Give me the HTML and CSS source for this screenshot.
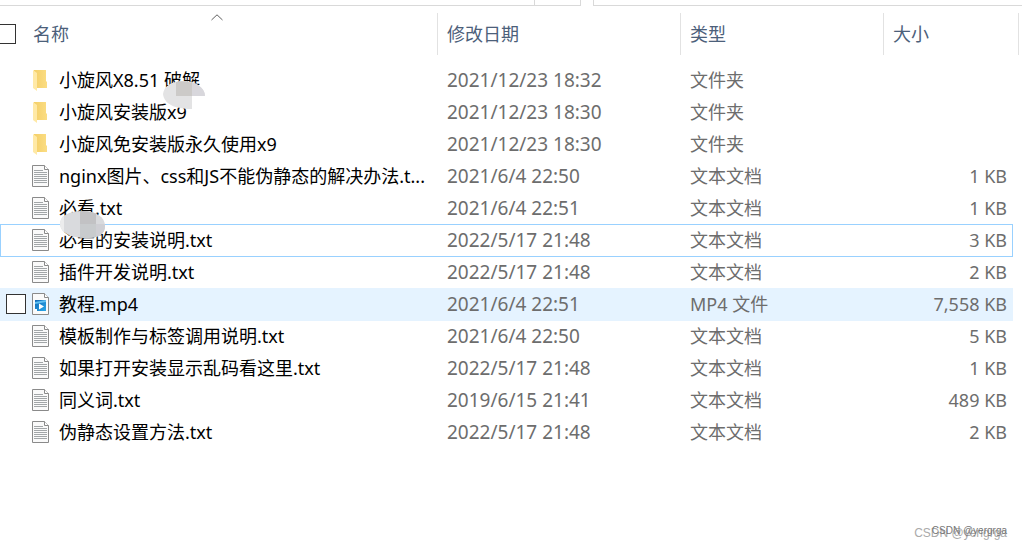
FILE: index.html
```html
<!DOCTYPE html>
<html lang="zh-CN">
<head>
<meta charset="utf-8">
<title>文件列表</title>
<link rel="stylesheet" href="styles.css">
</head>
<body>
<svg class="defs" aria-hidden="true">
  <defs>
    <linearGradient id="gold"><stop offset="0" stop-color="#f4cf68"/><stop offset="1" stop-color="#fbdd83"/></linearGradient>
    <linearGradient id="blue" x2="1" y2="1"><stop offset="0" stop-color="#1268b4"/><stop offset="1" stop-color="#29a8ea"/></linearGradient>
    <symbol id="folder" viewBox="0 0 18 24">
      <path d="M2 2H14V13L15 14V20H2Z" fill="url(#gold)"/>
      <path d="M1 2L5 5V23L1 20Z" fill="#ffe9a6"/>
    </symbol>
    <symbol id="page" viewBox="0 0 18 24">
      <path d="M.5 1.5H12.5L16.5 5.5V22.5H.5Z" fill="#fafafa" stroke="#8a8a8a"/>
      <path d="M12.5 1.5V5.5H16.5" fill="#fff" stroke="#8a8a8a"/>
    </symbol>
    <symbol id="text" viewBox="0 0 18 24">
      <use href="#page"/>
      <path d="M2 6.5H11M2 8.5H15M2 10.5H15M2 12.5H15M2 14.5H15M2 16.5H15M2 18.5H15" stroke="#a2a6a8"/>
    </symbol>
    <symbol id="video" viewBox="0 0 18 24">
      <use href="#page"/>
      <path d="M3 8H14V19H3Z" fill="url(#blue)"/>
      <path d="M3 10L14 8V10L3 12Z" fill="#62c1f2"/>
      <path d="M3 17H5V19H3ZM7 11.5L12 14.5L7 17.5Z" fill="#fff"/>
    </symbol>
  </defs>
</svg>
<div class="toolbar"><div class="address"></div><div class="search"></div></div>
<main class="files">
  <table class="list">
    <colgroup><col class="c-name"><col class="c-date"><col class="c-type"><col></colgroup>
    <thead>
      <tr>
        <th><div class="head-name"><input type="checkbox" class="check" aria-label="全选"><span>名称</span></div>
          <svg class="sort" width="12" height="7" viewBox="0 0 12 7"><path d="M.5 6L6 .8L11.5 6" fill="none" stroke="#606060"/></svg></th>
        <th>修改日期</th><th>类型</th><th>大小</th>
      </tr>
    </thead>
    <tbody>
      <tr><td><div class="name"><svg class="icon"><use href="#folder"/></svg><span>小旋风X8.51 破解</span></div></td><td class="num">2021/12/23 18:32</td><td>文件夹</td><td></td></tr>
      <tr><td><div class="name"><svg class="icon"><use href="#folder"/></svg><span>小旋风安装版x9</span></div></td><td class="num">2021/12/23 18:30</td><td>文件夹</td><td></td></tr>
      <tr><td><div class="name"><svg class="icon"><use href="#folder"/></svg><span>小旋风免安装版永久使用x9</span></div></td><td class="num">2021/12/23 18:30</td><td>文件夹</td><td></td></tr>
      <tr><td><div class="name"><svg class="icon"><use href="#text"/></svg><span>nginx图片、css和JS不能伪静态的解决办法.t...</span></div></td><td class="num">2021/6/4 22:50</td><td>文本文档</td><td class="size">1 KB</td></tr>
      <tr><td><div class="name"><svg class="icon"><use href="#text"/></svg><span>必看.txt</span></div></td><td class="num">2021/6/4 22:51</td><td>文本文档</td><td class="size">1 KB</td></tr>
      <tr class="focused"><td><div class="name"><svg class="icon"><use href="#text"/></svg><span>必看的安装说明.txt</span></div></td><td class="num">2022/5/17 21:48</td><td>文本文档</td><td class="size">3 KB</td></tr>
      <tr><td><div class="name"><svg class="icon"><use href="#text"/></svg><span>插件开发说明.txt</span></div></td><td class="num">2022/5/17 21:48</td><td>文本文档</td><td class="size">2 KB</td></tr>
      <tr class="hovered"><td><div class="name has-check"><input type="checkbox" class="check" id="pick"><svg class="icon"><use href="#video"/></svg><label for="pick">教程.mp4</label></div></td><td class="num">2021/6/4 22:51</td><td>MP4 文件</td><td class="size">7,558 KB</td></tr>
      <tr><td><div class="name"><svg class="icon"><use href="#text"/></svg><span>模板制作与标签调用说明.txt</span></div></td><td class="num">2021/6/4 22:50</td><td>文本文档</td><td class="size">5 KB</td></tr>
      <tr><td><div class="name"><svg class="icon"><use href="#text"/></svg><span>如果打开安装显示乱码看这里.txt</span></div></td><td class="num">2022/5/17 21:48</td><td>文本文档</td><td class="size">1 KB</td></tr>
      <tr><td><div class="name"><svg class="icon"><use href="#text"/></svg><span>同义词.txt</span></div></td><td class="num">2019/6/15 21:41</td><td>文本文档</td><td class="size">489 KB</td></tr>
      <tr><td><div class="name"><svg class="icon"><use href="#text"/></svg><span>伪静态设置方法.txt</span></div></td><td class="num">2022/5/17 21:48</td><td>文本文档</td><td class="size">2 KB</td></tr>
    </tbody>
  </table>
</main>
<svg class="smudge smudge-top" width="42" height="28" viewBox="0 0 42 28">
  <path d="M0 13C1 5 9 0 20 0C33 0 42 7 42 15H29V28C12 28 1 23 0 13Z" fill="#e3e3e4"/>
  <path d="M29 1C37 4 42 9 42 15H29Z" fill="#d8d7dc"/>
  <path d="M13 1Q21-1 29 2V15H13Z" fill="#cccac8"/>
</svg>
<svg class="smudge smudge-low" width="45" height="28" viewBox="0 0 45 28">
  <clipPath id="oval"><path d="M0 13C0 5 9 0 22 0C36 0 45 6 45 15C45 23 39 27 27 27C12 27 1 23 0 13Z"/></clipPath>
  <g clip-path="url(#oval)"><path d="M0 0H45V28H0Z" fill="#d9dadd"/><path d="M0 0H4V28H0Z" fill="#ececed"/><path d="M20 0H36V13H20Z" fill="#c2c2c4"/><path d="M20 13H36V28H20Z" fill="#c8cbcd"/><path d="M36 13H45V28H36Z" fill="#cfcfd4"/></g>
</svg>
<div class="watermark"><span class="mark-large">CSDN @yerigrga</span><span class="mark-small">CSDN @yergrga</span></div>
</body>
</html>
```

FILE: styles.css
```css
* { box-sizing: border-box; }
body {
  position: relative;
  margin: 0;
  min-height: 100vh;
  overflow: hidden;
  background: #fff;
  color: #6d6d6d;
  font: 18px/24px "Noto Sans", "Noto Sans CJK SC", sans-serif;
}
.defs { position: absolute; width: 0; height: 0; }
.toolbar { display: flex; gap: 12px; height: 6px; }
.address {
  width: 581px;
  border: solid #d9d9d9;
  border-width: 0 1px 1px 0;
  background: linear-gradient(#d9d9d9, #d9d9d9) 534px 0 / 1px 100% no-repeat;
}
.search { flex: 1; border: solid #d9d9d9; border-width: 0 0 1px 1px; }
.files { padding: 7px 9px 0 0; }
.list { width: 100%; table-layout: fixed; border-collapse: separate; border-spacing: 0; }
.c-name { width: 438px; }
.c-date { width: 243px; }
.c-type { width: 203px; }
th {
  position: relative;
  height: 42px;
  padding: 0 9px;
  border-right: 1px solid #e2e2e2;
  color: #4c607a;
  font-weight: 400;
  text-align: left;
}
th:last-child { border-right: 0; }
th:last-child::after {
  content: "";
  position: absolute;
  top: 0;
  right: -6px;
  width: 1px;
  height: 100%;
  background: #e2e2e2;
}
th:first-child { padding: 0; }
.head-name { display: flex; align-items: center; gap: 17px; margin-left: -4px; }
.sort { position: absolute; top: 1px; left: 50%; margin-left: -8px; }
tbody::before { content: ""; display: block; height: 9px; }
td {
  height: 32px;
  padding: 0 9px 2px;
  border: solid transparent;
  border-width: 1px 0 0;
  white-space: nowrap;
}
td:first-child { padding: 0 0 2px; color: #000; }
.name { display: flex; align-items: center; padding-left: 32px; }
.icon { flex: none; width: 18px; height: 24px; margin-right: 9px; }
.has-check { gap: 6px; padding-left: 6px; }
.has-check .icon { margin-right: 3px; }
.check {
  appearance: none;
  flex: none;
  width: 20px;
  height: 20px;
  margin: 0;
  border: 1px solid #333;
  background: #fff;
}
.num { font-size: 19px; }
.size { padding-right: 6px; text-align: right; }
.focused td, .focused + tr td { border-top-color: #99d1ff; }
.focused td:first-child { border-left: 1px solid #99d1ff; }
.focused td:first-child .name { padding-left: 31px; }
.focused td:last-child { border-right: 1px solid #99d1ff; padding-right: 5px; }
.hovered td { background: #e5f3ff; }
.hovered + tr td { border-top-color: #e5f3ff; }
.smudge { position: absolute; }
.smudge-top { top: 81px; left: 163px; }
.smudge-low { top: 211px; left: 60px; }
.watermark { position: absolute; right: 15px; bottom: 6px; font-family: "Liberation Sans", sans-serif; line-height: 20px; white-space: nowrap; }
.mark-large { color: #aaa; font-size: 12px; }
.mark-small { position: absolute; top: 0; right: 0; color: #777; font-size: 10px; }
```
